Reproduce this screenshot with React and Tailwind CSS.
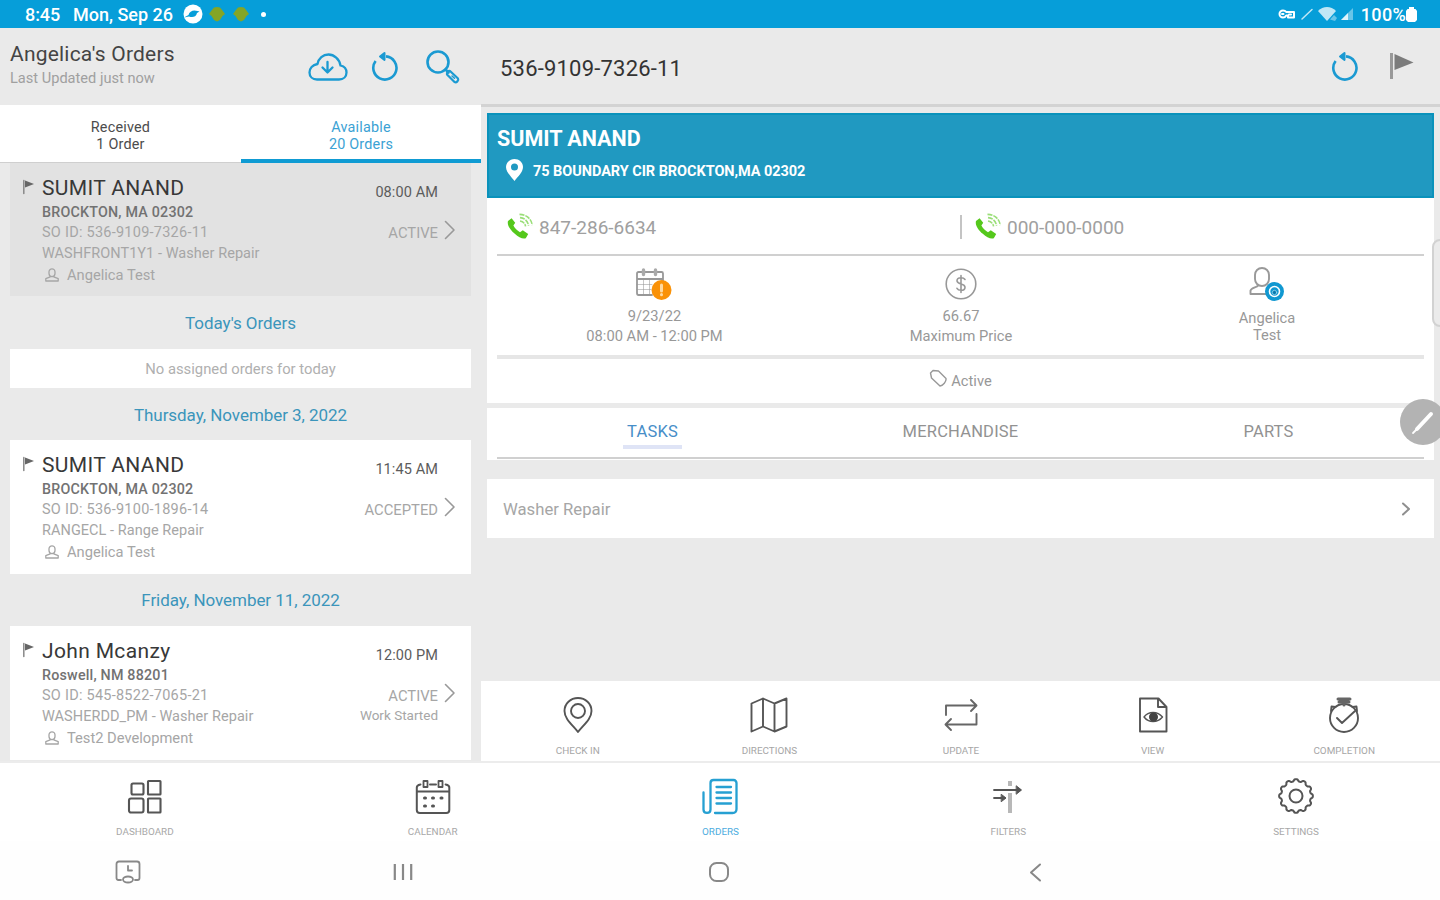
import React from "react";

function Svg({ w, h, vb, className = "", children, sw = 1.6 }) {
  return (
    <svg width={w} height={h} viewBox={vb || `0 0 ${w} ${h}`} fill="none" stroke="currentColor" strokeWidth={sw} strokeLinecap="round" strokeLinejoin="round" className={"shrink-0 " + className}>
      {children}
    </svg>
  );
}

const Refresh = ({ className }) => (
  <Svg w={28} h={32} sw={2.6} className={className}>
    <path d="M4.600 11A11.600 11.600 0 1 0 15 6.400" strokeLinecap="butt" />
    <path d="M13.500 3 9 6.500l4.500 3.500z" fill="currentColor" strokeWidth="2" />
  </Svg>
);

const Person = ({ className }) => (
  <Svg w={14} h={14} sw={1.3} className={className}>
    <path d="M7 .8a3 3 0 0 1 3 3v1.800a3 3 0 0 1-6 0V3.800a3 3 0 0 1 3-3zM5.200 8.800.8 10.600v2.400h12.400v-2.400L8.800 8.800" />
  </Svg>
);

const Phone = () => (
  <svg width="28" height="28" viewBox="0 0 28 28" className="shrink-0">
    <path d="M1 8 4.600 5.200 8.200 9.800 6.400 12.400c1.400 2.800 3.700 5 6.600 6.800l2.800-2 5.400 3.800-2.400 4.200c-2.600 1.200-7.200-.6-11-4.400C3.400 17-.2 12 1 8z" fill="#55c81c" />
    <path d="M13 8c3 .3 5 2.400 5.600 5.400M13 4.600c4.800.4 7.800 3.400 8.600 8M12.500 1.400c7 0 12 4.600 12.700 10.800" fill="none" stroke="#55c81c" strokeWidth="1.600" strokeDasharray="5 1" opacity=".6" />
  </svg>
);

function StatusBar() {
  return (
    <div className="flex h-7 shrink-0 items-center bg-[#069ed9] pl-[25px] pr-[23px] text-[18px] font-medium text-white">
      <span className="w-[48px] tracking-[-0.1px]">8:45</span>
      <span className="w-[110px] whitespace-nowrap">Mon, Sep 26</span>
      <Svg w={20} h={20} sw={0}>
        <circle cx="10" cy="10" r="9.500" fill="#fff" />
        <path d="M1 13.500 5.500 11c1-4 5-5.500 9-4l2 .5-2.500 1.500c-1 4.500-5 4.500-8 3.500z" fill="#069ed9" />
      </Svg>
      {[0, 1].map((i) => (
        <Svg key={i} w={16} h={18} sw={0} className={i ? "ml-2" : "ml-1.5"}>
          <path d="M5 2.500 8 2l3 .5 2.500 3L16 9l-2.500 2-2.500 4-3 1.500L5 15l-2.500-4L0 9l2.500-3.500z" fill="#84a526" />
        </Svg>
      ))}
      <span className="ml-[12px] h-[5px] w-[5px] rounded-full bg-white" />
      <div className="ml-auto flex items-center">
        <Svg w={19} h={12} sw={2}>
          <path d="M6 2.500a3.500 3.500 0 1 0 0 7c1.500 0 2.500-.8 3.200-2H11v2h6V4H9.200C8.500 3 7.500 2.500 6 2.500zM5 6h1.500M12 6.500h2" />
        </Svg>
        <Svg w={14} h={14} sw={1.500} className="ml-1"><path d="M2 12 12 2.500" opacity=".75" /></Svg>
        <Svg w={20} h={16} sw={0} className="ml-[4px]">
          <path d="M0 5C5-.5 13-.5 18 5L9 15z" fill="#fff" opacity=".75" />
          <path d="M12 13.500 16 9l3 3-2 3z" fill="#fff" opacity=".4" />
        </Svg>
        <Svg w={14} h={14} sw={0} className="ml-[3px]">
          <path d="M0 13 12 1v12z" fill="#fff" opacity=".4" />
          <path d="M0 13 7 6v7z" fill="#fff" opacity=".8" />
        </Svg>
        <span className="ml-[6px] tracking-[0.300px]">100%</span>
        <Svg w={11} h={17} sw={0}><path d="M3 1h5v2h1.500L11 5v9l-2 2H2l-2-2V5l1.500-2H3z" fill="#fff" /></Svg>
      </div>
    </div>
  );
}

function OrderCard({ name, city, so, task, tech, time, status, note, active }) {
  return (
    <div className={(active ? "h-[133px] bg-[#e2e2e2]" : "h-[134px] bg-white") + " mx-[10px] flex shrink-0 pl-3 pr-[14px] pt-[13px] text-[14px] text-[#a6a6a6]"}>
      <Svg w={14} h={16} sw={1.500} className="mt-[3px] text-[#888]">
        <path d="M1.800 1.500v13" />
        <path d="M3 1.500 12 5 3 8.500z" fill="#666" strokeWidth="0" />
      </Svg>
      <div className="ml-[6px] flex-1 whitespace-nowrap">
        <div className="h-[25px] text-[21px] leading-[25px] tracking-[0.350px] text-[#383838]">{name}</div>
        <div className="h-[21px] text-[14.300px] font-medium leading-[23px] tracking-[0.200px] text-[#727272]">{city}</div>
        <div className="h-[21px] text-[14.500px] leading-[22px] tracking-[0.250px]">{so}</div>
        <div className="h-[21px] text-[14.500px] leading-[21px] tracking-[0.050px]">{task}</div>
        <div className="flex h-[22px] items-center pt-px text-[14.700px]">
          <Person className="mb-px ml-[3px] mr-[8px]" />{tech}
        </div>
      </div>
      <div className="relative flex flex-col items-end whitespace-nowrap pr-[19px]">
        <div className="mt-[7px] h-[20px] text-[14.500px] leading-[20px] tracking-[0.100px] text-[#5c5c5c]">{time}</div>
        <div className="mt-[20px] h-[20px] text-[14.800px] leading-[20px]">{status}</div>
        <div className="h-[21px] text-[13.500px] leading-[19px]">{note}</div>
        <Svg w={12} h={20} sw={1.600} className="absolute right-[1px] top-[44px] text-[#999]"><path d="M1.500 1.500 10 10 1.500 18.500" /></Svg>
      </div>
    </div>
  );
}

const DayTitle = ({ className, children }) => (
  <div className={"flex shrink-0 items-center justify-center text-[17px] tracking-[-0.050px] text-[#3b95bb] " + className}>{children}</div>
);

function OrdersPanel() {
  return (
    <div className="flex w-[481px] shrink-0 flex-col overflow-hidden bg-[#eaeaea]">
      <div className="flex h-[77px] shrink-0 items-center">
        <div className="w-[308px] pl-[10px]">
          <div className="mt-[-4px] h-[26px] whitespace-nowrap text-[21px] leading-[26px] tracking-[0.200px] text-[#444]">Angelica's Orders</div>
          <div className="mb-[2px] h-[20px] whitespace-nowrap text-[14.600px] leading-[22px] text-[#a0a0a0]">Last Updated just now</div>
        </div>
        <div className="flex items-center text-[#1b9ad2]">
          <Svg w={40} h={30} sw={2.300}>
            <path d="M9 27.500h22c4.500 0 7.500-3 7.500-7 0-3.600-2.400-6.200-6-7C31.500 7 26 2.500 20.500 2.500 15 2.500 10.500 6.500 9.500 12 4.500 13 1.500 16.500 1.500 20.500c0 4 3 7 7.500 7z" />
            <path d="M19.500 10v10M14.500 15.500l5 5 5-5" />
          </Svg>
          <Refresh className="ml-[23px] mb-[2px]" />
          <Svg w={36} h={36} sw={2.600} className="ml-[26px]">
            <circle cx="13" cy="13" r="10.500" />
            <path d="m20.500 20.500 3 3" />
            <path d="m25 22 8 7.500c1 2-1.500 4.500-3.500 3.500L22 25.500c-.5-2 1.500-4 3-3.500z" strokeWidth="2.200" />
            <path d="m27 27 2.500 2.300" strokeWidth="1.500" />
          </Svg>
        </div>
      </div>
      <div className="flex h-[58px] shrink-0 bg-white text-center text-[14.400px] leading-[17px]">
        <div className="w-[241px] border-b border-[#cfcfcf] pt-[14px] tracking-[0.200px] text-[#4c4c4c]">Received<br />1 Order</div>
        <div className="flex-1 border-b-4 border-[#0f9bd3] pt-[14px] tracking-[0.200px] text-[#3ba2d4]">Available<br />20 Orders</div>
      </div>
      <OrderCard active name="SUMIT ANAND" city="BROCKTON, MA 02302" so="SO ID: 536-9109-7326-11" task="WASHFRONT1Y1 - Washer Repair" tech="Angelica Test" time="08:00 AM" status="ACTIVE" />
      <DayTitle className="h-[53px] pt-[2px]">Today's Orders</DayTitle>
      <div className="mx-[10px] flex h-[39px] shrink-0 items-center justify-center bg-white pt-[2px] text-[14.800px] text-[#b0b0b0]">No assigned orders for today</div>
      <DayTitle className="h-[52px] pt-[3px]">Thursday, November 3, 2022</DayTitle>
      <OrderCard name="SUMIT ANAND" city="BROCKTON, MA 02302" so="SO ID: 536-9100-1896-14" task="RANGECL - Range Repair" tech="Angelica Test" time="11:45 AM" status="ACCEPTED" />
      <DayTitle className="h-[52px] pt-[2px]">Friday, November 11, 2022</DayTitle>
      <OrderCard name="John Mcanzy" city="Roswell, NM 88201" so="SO ID: 545-8522-7065-21" task="WASHERDD_PM - Washer Repair" tech="Test2 Development" time="12:00 PM" status="ACTIVE" note="Work Started" />
    </div>
  );
}

function DetailHeader() {
  return (
    <div className="flex h-[79px] shrink-0 items-center border-b-[3px] border-[#d3d3d3] bg-[#eaeaea] pl-[19px] pr-[25px]">
      <span className="mt-[4px] text-[22px] tracking-[0.200px] text-[#333]">536-9109-7326-11</span>
      <Refresh className="ml-auto text-[#1b9ad2]" />
      <Svg w={26} h={28} sw={0} className="ml-[30px]">
        <path d="M1 1h3v26H1z" fill="#999" />
        <path d="M5.500 2 24.500 10.500 5.500 18z" fill="#7c7c7c" />
      </Svg>
    </div>
  );
}

function DetailPanel() {
  return (
    <div className="flex min-w-0 flex-1 flex-col bg-[#eaeaea]">
      <DetailHeader />
      <div className="ml-[6px] mr-[6px] mt-[6px] flex h-[85px] shrink-0 flex-col border-2 border-[#0a92bb] bg-[#2099c1] pl-2 text-white">
        <div className="mt-[10px] h-[28px] text-[21.500px] font-bold leading-[28px]">SUMIT ANAND</div>
        <div className="mt-[6px] flex h-[24px] items-center">
          <Svg w={17} h={22} sw={0} className="mb-[2px] ml-[9px]">
            <path fillRule="evenodd" d="M8.500 0C13 0 17 3.500 17 8c0 5-5 9.500-8.500 14C5 17.500 0 13 0 8 0 3.500 4 0 8.500 0zm0 4.500a3.500 3.500 0 1 0 0 7 3.500 3.500 0 0 0 0-7z" fill="#fff" />
          </Svg>
          <span className="ml-[10px] mt-px text-[14.500px] font-bold tracking-[-0.050px]">75 BOUNDARY CIR BROCKTON,MA 02302</span>
        </div>
      </div>
      <div className="mx-[6px] h-[205px] shrink-0 bg-white px-[10px]">
        <div className="flex h-[58px] items-center border-b-2 border-[#d0d0d0] pt-[2px] text-[19px] text-[#a0a0a0]">
          <div className="flex w-[463px] items-center pl-[10px]"><Phone /><span className="ml-[4px] mt-[2px]">847-286-6634</span></div>
          <div className="h-[24px] w-[2px] bg-[#c4c4c4]" />
          <div className="flex items-center pl-[13px]"><Phone /><span className="ml-[4px] mt-[2px]">000-000-0000</span></div>
        </div>
        <div className="flex h-[103px] border-b-4 border-[#e6e6e6] text-center text-[14.700px] leading-[20px] text-[#989898]">
          <div className="flex w-[315px] flex-col items-center">
            <Svg w={38} h={34} sw={1.800} className="ml-[-2px] mt-[11px]">
              <path d="M7 5H3.500C2.500 5 2 5.500 2 6.500V26c0 1 .5 2 1.500 2H17M10.500 5h8M22.500 5h4c1 0 1.500.5 1.500 1.500V14M2 12h26" />
              <path d="M8.500 3v4.500M20.500 3v4.500" strokeWidth="3.400" stroke="#aaa" />
              <path d="M2 17.500h15M2 22.500h14M8.500 12v16M14.500 12v16" strokeWidth="1" opacity=".55" />
              <circle cx="26.500" cy="23" r="10" fill="#fa9208" stroke="none" />
              <path d="M26.500 18v6M26.500 27.500v.3" stroke="#ffd9a0" strokeWidth="3" />
            </Svg>
            <div className="mt-[5px]">9/23/22<br />08:00 AM - 12:00 PM</div>
          </div>
          <div className="flex w-[298px] flex-col items-center">
            <Svg w={34} h={34} sw={1.600} className="mt-[11px]">
              <circle cx="17" cy="17" r="14.800" />
              <path d="M21 12.500c-1-1.500-2.500-1.800-4-1.800-2.300 0-4 1.200-4 3.100 0 4.200 8 2.200 8 6.400 0 1.900-1.700 3.100-4 3.100-1.700 0-3.200-.5-4-2M17 8.500v17" />
            </Svg>
            <div className="mt-[5px]">66.67<br />Maximum Price</div>
          </div>
          <div className="flex flex-1 flex-col items-center">
            <Svg w={36} h={36} sw={1.900} className="mt-[10px] text-[#999]">
              <path d="M13 2c4 0 7 3 7 7v4c0 4-3 7-7 7s-7-3-7-7V9c0-4 3-7 7-7zM9 19.500c-1 2-6.500 2-7.500 5V28H17" />
              <circle cx="25.500" cy="25.500" r="9.500" fill="#1198d1" stroke="none" />
              <circle cx="25.500" cy="25.500" r="5" stroke="#fff" strokeWidth="1.600" />
              <circle cx="25.500" cy="26.500" r="2.200" fill="#0878ae" stroke="#9bd8ef" strokeWidth=".8" />
            </Svg>
            <div className="mt-[8px] leading-[17px]">Angelica<br />Test</div>
          </div>
        </div>
        <div className="flex h-[44px] items-center justify-center text-[14.700px] text-[#989898]">
          <Svg w={18} h={18} sw={1.400} className="mb-[7px] mr-[4px]">
            <path d="M1.500 4 4 1.500 9.500 2 17 9.500c.5 3-3 7-6 7.500L2.500 9z" />
          </Svg>
          <span>Active</span>
        </div>
      </div>
      <div className="mx-[6px] mt-[5px] h-[52px] shrink-0 bg-white px-[10px]">
        <div className="flex h-[51px] border-b-2 border-[#d0d0d0] text-center text-[16.500px] text-[#929292]">
          <div className="flex w-[311px] justify-center"><span className="h-[41px] border-b-4 border-[#dfe4f6] px-[4px] pt-[12px] tracking-[0.200px] text-[#478ec8]">TASKS</span></div>
          <div className="w-[305px] pt-[12px] tracking-[0.200px]">MERCHANDISE</div>
          <div className="flex-1 pt-[12px] tracking-[0.200px]">PARTS</div>
        </div>
      </div>
      <div className="mx-[6px] mt-[19px] flex h-[59px] shrink-0 items-center justify-between bg-white pl-[16px] pr-[23px] text-[16.700px] text-[#a6a6a6]">
        <span className="mt-[3px]">Washer Repair</span>
        <Svg w={10} h={14} sw={2} className="text-[#8f8f8f]"><path d="M2 1.500 8 7l-6 5.500" /></Svg>
      </div>
      <Toolbar />
    </div>
  );
}

function Tool({ label, children }) {
  return (
    <div className="flex flex-1 flex-col items-center pt-[15px] text-[#555]">
      {children}
      <span className="mt-[8px] h-[14px] text-[9.900px] leading-[17px] text-[#a6a6a6]">{label}</span>
    </div>
  );
}

function Toolbar() {
  return (
    <div className="mt-auto flex h-[80px] shrink-0 bg-white pl-px">
      <Tool label="CHECK IN">
        <Svg w={38} h={38} sw={1.900}>
          <path d="M19 2c7.500 0 13.500 5.500 13.500 13 0 8-8 14-13.500 21C13.500 29 5.500 23 5.500 15 5.500 7.500 11.500 2 19 2z" />
          <circle cx="19" cy="15" r="7" />
        </Svg>
      </Tool>
      <Tool label="DIRECTIONS">
        <Svg w={38} h={38} sw={1.900}><path d="M1.500 7.500 13 2.500l11.500 5 12-5v28l-12 5-11.500-5-11.500 5zM13 2.500v28M24.500 7.500v28" /></Svg>
      </Tool>
      <Tool label="UPDATE">
        <Svg w={38} h={38} sw={1.900} className="text-[#666]"><path d="M4 19V9.500h30M29 4l5.500 5.500L29 15M34.500 18v10.500H4M9 23l-5.500 5.500L9 34" /></Svg>
      </Tool>
      <Tool label="VIEW">
        <Svg w={38} h={38} sw={1.900}>
          <path d="M6 2.500h18.500l8 8.500v24.500H6zM24 3v8h8" />
          <path d="M10 21c4.500-6 13.500-6 18.500 0-5 6-14 6-18.500 0z" strokeWidth="1.400" />
          <circle cx="19.500" cy="21" r="4.500" fill="#444" stroke="none" />
        </Svg>
      </Tool>
      <Tool label="COMPLETION">
        <Svg w={38} h={38} sw={1.900}>
          <circle cx="19" cy="22" r="14" />
          <path d="M13 3h12M14 6h10M19 3v6" strokeWidth="3" stroke="#666" />
          <path d="m6 15 .5-4.500 4 .5M32 15l-.5-4.500-4 .5M12 22l5 5 13-12" />
        </Svg>
      </Tool>
    </div>
  );
}

function NavItem({ label, active, children }) {
  return (
    <div className={(active ? "text-[#26a0d2]" : "text-[#555]") + " flex flex-1 flex-col items-center"}>
      {children}
      <span className={(active ? "text-[#4dade0]" : "text-[#a8a8a8]") + " mt-[9px] text-[9.900px] leading-[16px]"}>{label}</span>
    </div>
  );
}

const gearPath =
  Array.from({ length: 144 }, (_, i) => {
    const a = (i / 144) * Math.PI * 2;
    const r = 15.800 + 1.100 * Math.tanh(2 * Math.cos(12 * a));
    return `${i ? "L" : "M"}${(18 + r * Math.cos(a)).toFixed(2)} ${(19 + r * Math.sin(a)).toFixed(2)}`;
  }).join("") + "z";

function BottomNav() {
  return (
    <div className="flex h-[80px] shrink-0 border-t-2 border-[#ececec] bg-white pl-px pt-[14px]">
      <NavItem label="DASHBOARD">
        <Svg w={36} h={38} sw={2.100}>
          <rect x="4.500" y="6.500" width="12" height="11" rx="1.500" /><rect x="21" y="4" width="12.500" height="13.500" rx=".5" />
          <rect x="2" y="21.500" width="14.500" height="14" rx="2" /><rect x="21" y="21.500" width="12.500" height="14" rx=".5" />
        </Svg>
      </NavItem>
      <NavItem label="CALENDAR">
        <Svg w={36} h={38} sw={2}>
          <path d="M5.500 7.500C3 8 1.800 8.500 1.800 10.500V33c0 2 1 3 3 3h26.500c2 0 3-1 3-3V10.500c0-2-1.200-2.500-3.700-3M2 14.500h32M15 7.500h6" />
          <path d="M8.500 4h4v6h-4zM23.500 4h4v6h-4z" strokeWidth="1.800" />
          <path d="M9.500 21h1M17.500 21h1M26 21h1M9.500 29h1M17.500 29h1" strokeWidth="3" />
        </Svg>
      </NavItem>
      <NavItem label="ORDERS" active>
        <Svg w={36} h={38} sw={2.300}>
          <path d="M13 36h17.500c2.500 0 4-1.500 4-4V6c0-1.500-1-3-3-3h-20C9.500 3 8.500 4.500 8.500 6v26.500c0 4.500-7 4.500-7 0V15.500M14.500 10h14.500M14.500 15.500h14.500M14.500 21h14.500M14.500 26.500h14.500" />
        </Svg>
      </NavItem>
      <NavItem label="FILTERS">
        <Svg w={36} h={38} sw={1.800}>
          <path d="M20 4v5M20 16v20" strokeWidth="4" stroke="#b8b8b8" strokeLinecap="butt" />
          <path d="M4 13h26M4 21h10.500" />
          <path d="m26.500 9 5 4-5 4zM11.500 17.500 16 21l-4.500 3.500z" fill="currentColor" strokeWidth="1" />
        </Svg>
      </NavItem>
      <NavItem label="SETTINGS">
        <Svg w={36} h={38} sw={2}>
          <path d={gearPath} />
          <circle cx="18" cy="19" r="6.500" />
        </Svg>
      </NavItem>
    </div>
  );
}

function SystemNav() {
  return (
    <div className="flex flex-1 items-start bg-[#fefefe] text-[#888]">
      <Svg w={26} h={24} sw={1.800} className="ml-[115px] mt-[19px]">
        <path d="M6 20H3.500C2 20 1.500 19 1.500 18V4C1.500 2.500 2.500 1.500 4 1.500h18c1.500 0 2.500 1 2.500 2.500v14c0 1-.5 2-2 2H20M13 6v4.500h4" />
        <ellipse cx="13" cy="19.500" rx="5" ry="3" />
      </Svg>
      <Svg w={20} h={18} sw={2.200} className="ml-[252px] mt-[22px]"><path d="M1.800 1v16M10 1v16M18.200 1v16" strokeLinecap="butt" /></Svg>
      <Svg w={22} h={22} sw={2} className="ml-[295px] mt-[20px]"><rect x="2" y="2" width="18" height="18" rx="6.500" /></Svg>
      <Svg w={14} h={20} sw={2} className="ml-[298px] mt-[21px]"><path d="M12 2.500 3 10.500l9 8" /></Svg>
    </div>
  );
}

export default function App() {
  return (
    <div className="relative flex h-[900px] w-[1440px] flex-col overflow-hidden bg-white font-['Roboto',sans-serif]">
      <StatusBar />
      <div className="flex h-[733px] shrink-0">
        <OrdersPanel />
        <DetailPanel />
      </div>
      <BottomNav />
      <SystemNav />
      <div className="absolute left-[1432px] top-[239px] h-[88px] w-[20px] rounded-[8px] border-2 border-[#d2d2d2] bg-[#ebebeb]" />
      <div className="absolute left-[1400px] top-[399px] flex h-[46px] w-[46px] items-center justify-center rounded-full bg-[#b3b3b3]">
        <Svg w={24} h={26} sw={4} className="text-white"><path d="m6 20 14-15" /><path d="m2 24 4-4" strokeWidth="1.800" /></Svg>
      </div>
    </div>
  );
}
